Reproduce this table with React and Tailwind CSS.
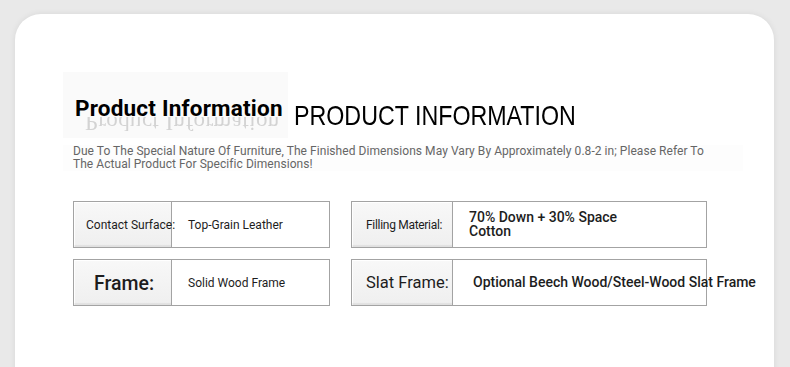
import React from "react";

const roboto = { fontFamily: "Roboto, 'Liberation Sans', sans-serif" };

function SpecCell({ label, labelClass, value, valueClass, labelWidth, width }) {
  return (
    <div
      className={`flex h-[47px] border border-[#a3a3a3] bg-white ${width}`}
    >
      <div
        className={`flex shrink-0 items-center border-r border-[#a3a3a3] bg-gradient-to-b from-[#f8f8f8] to-[#efefef] shadow-[inset_0_-2px_1px_rgba(0,0,0,0.06),inset_1px_1px_0_#ffffff] ${labelWidth}`}
      >
        <span className={`whitespace-nowrap text-[#1d1d1d] ${labelClass}`}>{label}</span>
      </div>
      <div className="flex items-center">
        <span className={`whitespace-nowrap text-[#1d1d1d] ${valueClass}`}>{value}</span>
      </div>
    </div>
  );
}

export default function App() {
  return (
    <div
      className="h-[367px] w-[790px] overflow-hidden bg-[#e9e9e9] pl-[15px] pr-[16px] pt-[14px]"
      style={roboto}
    >
      <div className="h-[420px] rounded-[26px] bg-white pl-[48px] pt-[58px] shadow-[0_0_6px_rgba(0,0,0,0.08)]">
        {/* heading row */}
        <div className="flex items-start">
          <div className="relative h-[66px] w-[225px] bg-[#fafafa] pl-[12px] pt-[23px]">
            <div className="relative z-10 whitespace-nowrap text-[22.5px] font-bold leading-[26px] tracking-[0.2px] text-black">
              Product Information
            </div>
            {/* faint mirrored reflection under the heading */}
            <div
              className="pointer-events-none absolute left-[22px] top-[45px] flex h-[17px] items-start overflow-hidden -scale-y-100 whitespace-nowrap text-[23px] font-light leading-[24px] tracking-[0.4px] text-[#8c8c8c] opacity-35 blur-[0.4px]"
              style={{ fontFamily: "'Liberation Serif', serif" }}
            >
              Product Information
            </div>
          </div>
          <div
            className="ml-[6px] mt-[30px] origin-left scale-x-[0.83] whitespace-nowrap text-[28px] leading-[28px] text-black"
            style={{ fontFamily: "'Liberation Sans', Arial, sans-serif" }}
          >
            PRODUCT INFORMATION
          </div>
        </div>

        {/* note */}
        <div className="mt-[7px] w-[680px] bg-[#fdfdfd] pl-[10px] text-[12px] leading-[13px] tracking-[0.05px] text-[#666666]">
          Due To The Special Nature Of Furniture, The Finished Dimensions May Vary By Approximately 0.8-2 in; Please Refer To
          <br />
          The Actual Product For Specific Dimensions!
        </div>

        {/* specs */}
        <div className="ml-[10px] mt-[30px] grid w-fit grid-cols-[257px_356px] gap-x-[21px] gap-y-[11px]">
          <SpecCell
            width="w-[257px]"
            labelWidth="w-[98px] pl-[12px]"
            label="Contact Surface:"
            labelClass="text-[12px] pt-[1px]"
            value="Top-Grain Leather"
            valueClass="pl-[16px] text-[12px]"
          />
          <SpecCell
            width="w-[356px]"
            labelWidth="w-[101px] pl-[14px]"
            label="Filling Material:"
            labelClass="text-[12px] tracking-[-0.3px]"
            value={
              <span className="block text-[14px] font-medium leading-[14px]">
                70% Down + 30% Space
                <br />
                Cotton
              </span>
            }
            valueClass="pl-[16px] pb-[2px]"
          />
          <SpecCell
            width="w-[257px]"
            labelWidth="w-[98px] pl-[20px]"
            label="Frame:"
            labelClass="text-[19.5px] font-medium pt-[3px]"
            value="Solid Wood Frame"
            valueClass="pl-[16px] text-[12px]"
          />
          <SpecCell
            width="w-[356px]"
            labelWidth="w-[101px] pl-[14px]"
            label="Slat Frame:"
            labelClass="text-[16.5px] pt-[2px]"
            value="Optional Beech Wood/Steel-Wood Slat Frame"
            valueClass="pl-[20px] text-[14px] font-medium"
          />
        </div>
      </div>
    </div>
  );
}
